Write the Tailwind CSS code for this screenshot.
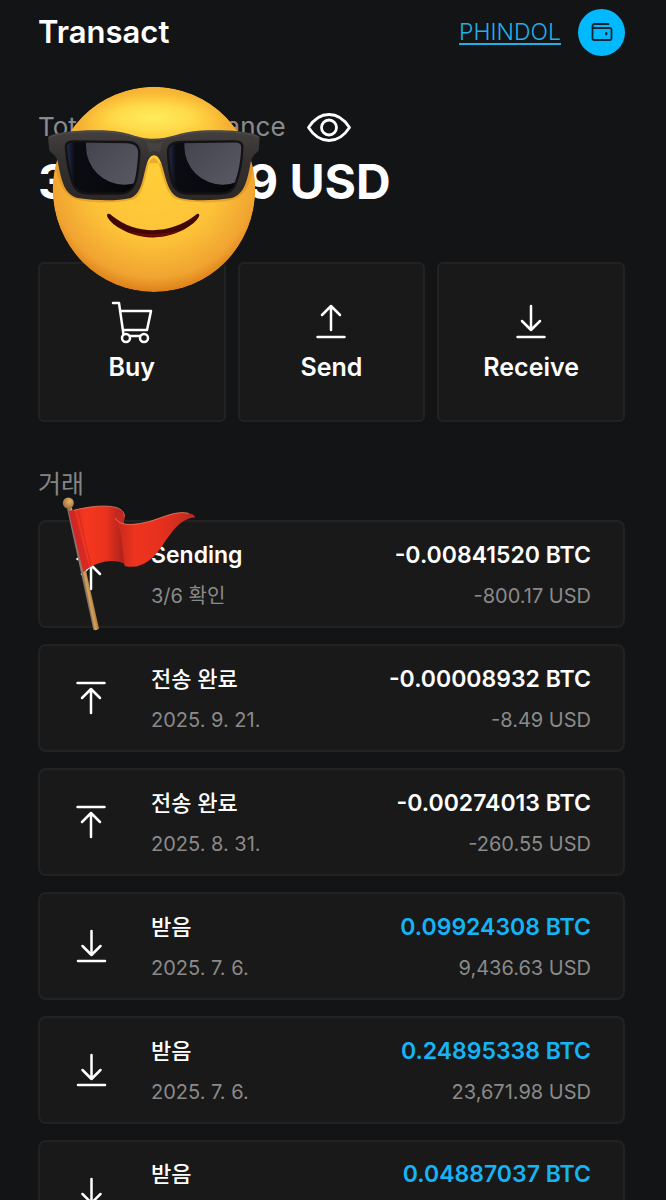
<!DOCTYPE html>
<html lang="ko" class="h-full">

<head>
  <meta charset="UTF-8">
  <meta name="viewport" content="width=device-width, initial-scale=1.0">
  <title>Transact</title>

  <script src="https://cdn.jsdelivr.net/npm/@tailwindcss/browser@4"></script>
</head>

<body class="h-full overflow-hidden bg-[#131416] text-white font-['Inter','Noto_Sans_CJK_KR',sans-serif]">
  <!-- shared icons -->
  <svg class="hidden">
    <symbol id="icon-sent" viewBox="0 0 32 36" fill="none" stroke="currentColor" stroke-width="2.500" stroke-linecap="round" stroke-linejoin="round">
      <path d="M2.500 3h27M16 9v24M7 18l9-9 9 9" />
    </symbol>
    <symbol id="icon-received" viewBox="0 0 32 36" fill="none" stroke="currentColor" stroke-width="2.500" stroke-linecap="round" stroke-linejoin="round">
      <path d="M3 33h27M16.500 3v24M7.500 18l9 9 9-9" />
    </symbol>
  </svg>

  <main class="relative pl-[38px] pr-[41px]">
    <header class="flex h-16 items-center justify-between">
      <h1 class="text-[31px] font-semibold leading-10">Transact</h1>
      <div class="flex items-center gap-[17px]">
        <a href="#" class="text-[23px] font-light text-[#22aee6] underline decoration-2 underline-offset-3">PHINDOL</a>
        <button aria-label="Wallet" class="flex size-[47px] items-center justify-center rounded-full bg-[#00b9ff] text-[#10252f]">
          <svg class="h-5 w-6" viewBox="0 0 24 20" fill="none" stroke="currentColor" stroke-width="1.8" stroke-linecap="round" stroke-linejoin="round">
            <path d="M18.500 2H4.500a2 2 0 0 0 0 4H20a1.500 1.500 0 0 1 1.500 1.500v9A1.500 1.500 0 0 1 20 18H4a1.500 1.500 0 0 1-1.500-1.500V4" />
            <rect x="15.500" y="10.500" width="1.500" height="2.500" rx=".7" fill="currentColor" stroke-width=".8" />
          </svg>
        </button>
      </div>
    </header>

    <section class="mt-[45px]">
      <div class="flex items-center gap-5">
        <h2 class="text-[26px] leading-9 text-[#8b8b8d]">Total Wallet Balance</h2>
        <button aria-label="Hide balance">
          <svg class="h-9 w-[46px]" viewBox="0 0 46 36" fill="none" stroke="currentColor" stroke-width="2.8" stroke-linejoin="round">
            <path d="M2.500 18.500C8 10 15 5.500 23 5.500S38 10 43.500 18.500C38 27 31 31.500 23 31.500S8 27 2.500 18.500Z" />
            <circle cx="23" cy="18.500" r="7.500" />
          </svg>
        </button>
      </div>
      <p class="mt-[7px] text-5xl font-bold leading-[60px]">311,784.19 USD</p>
    </section>

    <nav class="mt-[50px] grid grid-cols-3 gap-3">
      <button class="flex h-40 flex-col items-center rounded-md border-2 border-[#222222] bg-[#191919] pt-[35px]">
        <svg class="h-12 w-12" viewBox="0 0 48 48" fill="none" stroke="currentColor" stroke-width="2.500" stroke-linecap="round" stroke-linejoin="round">
          <path d="M5 4h6l5 35M12 12h31l-4 19H15M16 37h20" />
          <circle cx="18" cy="39" r="4" fill="#191919" />
          <circle cx="36" cy="39" r="4" fill="#191919" />
        </svg>
        <span class="mt-1 text-[25px] font-semibold leading-8">Buy</span>
      </button>
      <button class="flex h-40 flex-col items-center rounded-md border-2 border-[#222222] bg-[#191919] pt-[35px]">
        <svg class="h-12 w-12" viewBox="0 0 48 48" fill="none" stroke="currentColor" stroke-width="2.500" stroke-linecap="round" stroke-linejoin="round">
          <path d="M10.500 38h27M24 31V7M15 16l9-9 9 9" />
        </svg>
        <span class="mt-1 text-[25px] font-semibold leading-8">Send</span>
      </button>
      <button class="flex h-40 flex-col items-center rounded-md border-2 border-[#222222] bg-[#191919] pt-[35px]">
        <svg class="h-12 w-12" viewBox="0 0 48 48" fill="none" stroke="currentColor" stroke-width="2.500" stroke-linecap="round" stroke-linejoin="round">
          <path d="M10.500 38h27M24 7v24M15 22l9 9 9-9" />
        </svg>
        <span class="mt-1 text-[25px] font-semibold leading-8">Receive</span>
      </button>
    </nav>

    <h2 class="mt-11 text-[25px] leading-9 text-[#858585]">거래</h2>

    <ul class="mt-[18px] flex flex-col gap-4">
      <li class="flex h-27 items-center rounded-lg border-2 border-[#222222] bg-[#191919] pt-0.5 pr-8 pl-[35px]">
        <svg class="-mt-0.5 h-9 w-8"><use href="#icon-sent" /></svg>
        <div class="ml-11 flex-1">
          <p class="text-[23px] font-semibold leading-8">Sending</p>
          <p class="mt-[9px] text-xl leading-8 text-[#8a8a8a]">3/6 확인</p>
        </div>
        <div class="text-right">
          <p class="text-[23px] font-semibold leading-8">-0.00841520 BTC</p>
          <p class="mt-[9px] text-xl leading-8 text-[#8a8a8a]">-800.17 USD</p>
        </div>
      </li>
      <li class="flex h-27 items-center rounded-lg border-2 border-[#222222] bg-[#191919] pt-0.5 pr-8 pl-[35px]">
        <svg class="-mt-0.5 h-9 w-8"><use href="#icon-sent" /></svg>
        <div class="ml-11 flex-1">
          <p class="text-[22px] font-medium leading-8">전송 완료</p>
          <p class="mt-[9px] text-xl leading-8 text-[#8a8a8a]">2025. 9. 21.</p>
        </div>
        <div class="text-right">
          <p class="text-[23px] font-semibold leading-8">-0.00008932 BTC</p>
          <p class="mt-[9px] text-xl leading-8 text-[#8a8a8a]">-8.49 USD</p>
        </div>
      </li>
      <li class="flex h-27 items-center rounded-lg border-2 border-[#222222] bg-[#191919] pt-0.5 pr-8 pl-[35px]">
        <svg class="-mt-0.5 h-9 w-8"><use href="#icon-sent" /></svg>
        <div class="ml-11 flex-1">
          <p class="text-[22px] font-medium leading-8">전송 완료</p>
          <p class="mt-[9px] text-xl leading-8 text-[#8a8a8a]">2025. 8. 31.</p>
        </div>
        <div class="text-right">
          <p class="text-[23px] font-semibold leading-8">-0.00274013 BTC</p>
          <p class="mt-[9px] text-xl leading-8 text-[#8a8a8a]">-260.55 USD</p>
        </div>
      </li>
      <li class="flex h-27 items-center rounded-lg border-2 border-[#222222] bg-[#191919] pt-0.5 pr-8 pl-[35px]">
        <svg class="-mt-0.5 h-9 w-8"><use href="#icon-received" /></svg>
        <div class="ml-11 flex-1">
          <p class="text-[22px] font-medium leading-8">받음</p>
          <p class="mt-[9px] text-xl leading-8 text-[#8a8a8a]">2025. 7. 6.</p>
        </div>
        <div class="text-right">
          <p class="text-[23px] font-semibold leading-8 text-[#14b4f5]">0.09924308 BTC</p>
          <p class="mt-[9px] text-xl leading-8 text-[#8a8a8a]">9,436.63 USD</p>
        </div>
      </li>
      <li class="flex h-27 items-center rounded-lg border-2 border-[#222222] bg-[#191919] pt-0.5 pr-8 pl-[35px]">
        <svg class="-mt-0.5 h-9 w-8"><use href="#icon-received" /></svg>
        <div class="ml-11 flex-1">
          <p class="text-[22px] font-medium leading-8">받음</p>
          <p class="mt-[9px] text-xl leading-8 text-[#8a8a8a]">2025. 7. 6.</p>
        </div>
        <div class="text-right">
          <p class="text-[23px] font-semibold leading-8 text-[#14b4f5]">0.24895338 BTC</p>
          <p class="mt-[9px] text-xl leading-8 text-[#8a8a8a]">23,671.98 USD</p>
        </div>
      </li>
      <li class="flex h-27 items-start rounded-lg border-2 border-[#222222] bg-[#191919] pt-4 pr-8 pl-[35px]">
        <svg class="mt-[18px] h-9 w-8"><use href="#icon-received" /></svg>
        <p class="ml-11 flex-1 text-[22px] font-medium leading-8">받음</p>
        <p class="text-[23px] font-semibold leading-8 text-[#14b4f5]">0.04887037 BTC</p>
      </li>
    </ul>

    <!-- sunglasses sticker over the balance -->
    <svg class="absolute top-[86px] left-[47px] h-[207px] w-[214px]" viewBox="81 18 642 621">
      <defs>
        <radialGradient id="face" cx=".5" cy=".42" r=".6">
          <stop offset="0" stop-color="#ffcf38" />
          <stop offset=".55" stop-color="#fdc238" />
          <stop offset=".85" stop-color="#f0a431" />
          <stop offset="1" stop-color="#d87512" />
        </radialGradient>
        <radialGradient id="shine" cx=".5" cy=".5" r=".5">
          <stop offset="0" stop-color="#ffec5c" />
          <stop offset=".5" stop-color="#ffe552" stop-opacity=".7" />
          <stop offset="1" stop-color="#ffd43c" stop-opacity="0" />
        </radialGradient>
        <linearGradient id="frame" x1="0" y1="0" x2="0" y2="1">
          <stop offset="0" stop-color="#444040" />
          <stop offset=".4" stop-color="#353131" />
          <stop offset="1" stop-color="#2c2828" />
        </linearGradient>
        <linearGradient id="glare" x1="0" y1="0" x2="1" y2="1">
          <stop offset="0" stop-color="#3c3c45" />
          <stop offset=".6" stop-color="#51515c" />
          <stop offset="1" stop-color="#5d5d69" />
        </linearGradient>
        <linearGradient id="lens" x1="0" y1="0" x2="1" y2="0">
          <stop offset="0" stop-color="#2c3c66" />
          <stop offset=".14" stop-color="#0b0c12" />
          <stop offset="1" stop-color="#050609" />
        </linearGradient>
        <clipPath id="head">
          <ellipse cx="402" cy="328" rx="304" ry="308" />
        </clipPath>
        <clipPath id="left-lens">
          <path d="M138 204C136 190 144 184 160 184L320 186C346 186 358 196 358 220 356 250 354 282 346 306 338 330 322 341 298 341L204 341C178 340 164 328 158 308 146 274 140 238 138 204Z" />
        </clipPath>
        <clipPath id="right-lens">
          <path d="M667 204C668 190 660 184 644 184L484 186C456 186 442 196 444 220 446 250 448 282 456 306 464 330 480 341 504 341L604 341C628 340 642 328 648 308 660 274 666 238 667 204Z" />
        </clipPath>
      </defs>
      <g clip-path="url(#head)">
        <ellipse cx="402" cy="328" rx="304" ry="308" fill="url(#face)" />
        <ellipse cx="400" cy="112" rx="230" ry="76" fill="url(#shine)" />
        <path d="M104 250C116 310 130 350 176 360 220 370 300 370 340 358 384 342 374 236 401 234 428 236 424 342 472 358 510 370 590 370 634 360 680 350 690 310 704 250Z" fill="#d98a1c" opacity=".5" />
      </g>
      <path d="M84 172C100 154 200 148 270 152 330 156 350 176 400 176 450 176 480 156 536 152 600 148 700 152 719 170L716 212C704 222 696 228 692 248 682 300 674 346 630 355 584 362 516 364 478 354 426 338 438 228 402 226 366 228 382 338 332 354 294 364 224 362 178 355 132 346 124 300 114 248 110 228 100 222 88 212Z" fill="url(#frame)" />
      <path d="M90 172C110 158 200 152 270 156 330 160 350 180 400 180 450 180 480 160 536 156 600 152 690 156 714 172" fill="none" stroke="#5c5858" stroke-width="4" opacity=".5" />
      <path d="M378 184Q404 194 428 184L420 218Q402 208 388 218Z" fill="#4c4848" opacity=".6" />
      <g clip-path="url(#left-lens)">
        <path d="M130 170h240v180H130z" fill="url(#lens)" />
        <circle cx="313" cy="199" r="115" fill="url(#glare)" />
      </g>
      <g clip-path="url(#right-lens)">
        <path d="M434 170h240v180H434z" fill="url(#lens)" />
        <circle cx="608" cy="199" r="115" fill="url(#glare)" />
      </g>
      <path d="M138 204C136 190 144 184 160 184L320 186C346 186 358 196 358 220 356 250 354 282 346 306 338 330 322 341 298 341L204 341C178 340 164 328 158 308 146 274 140 238 138 204ZM667 204C668 190 660 184 644 184L484 186C456 186 442 196 444 220 446 250 448 282 456 306 464 330 480 341 504 341L604 341C628 340 642 328 648 308 660 274 666 238 667 204Z" fill="none" stroke="#141214" stroke-width="7" />
      <path d="M262 403C266 400 271 402 277 408 350 466 452 464 526 406 532 400 537 400 538 405 538 412 530 420 520 430 450 486 350 486 280 432 268 421 258 409 262 403Z" fill="#400805" />
      <path d="M322 452C370 466 432 466 482 450 440 476 364 478 322 452Z" fill="#6b0a06" />
    </svg>

    <!-- red flag sticker over the pending transaction -->
    <svg class="absolute top-[496px] left-[62px] h-[136px] w-[134px]" viewBox="126 108 402 408">
      <defs>
        <linearGradient id="pole" gradientUnits="userSpaceOnUse" x1="178" y1="328" x2="198" y2="324">
          <stop offset="0" stop-color="#7d7784" />
          <stop offset=".35" stop-color="#8d765c" />
          <stop offset=".6" stop-color="#d8a45b" />
          <stop offset="1" stop-color="#b5813f" />
        </linearGradient>
        <linearGradient id="cloth" x1="0" y1="0" x2="1" y2="0">
          <stop offset="0" stop-color="#d92a20" />
          <stop offset=".3" stop-color="#f5371f" />
          <stop offset=".65" stop-color="#ea321e" />
          <stop offset="1" stop-color="#a51f1b" />
        </linearGradient>
        <linearGradient id="tail" x1="0" y1="0" x2="1" y2="0">
          <stop offset="0" stop-color="#c3271d" />
          <stop offset=".25" stop-color="#ee341f" />
          <stop offset=".6" stop-color="#e5301e" />
          <stop offset="1" stop-color="#b92a20" />
        </linearGradient>
        <radialGradient id="knob" cx=".6" cy=".35" r=".7">
          <stop offset="0" stop-color="#e5b36c" />
          <stop offset="1" stop-color="#9c6e39" />
        </radialGradient>
      </defs>
      <path d="M141 145L156 143 237 506Q229 513 220 509Z" fill="url(#pole)" />
      <circle cx="145" cy="129" r="16.500" fill="url(#knob)" />
      <path d="M146 154C190 140 250 134 286 142 310 148 318 164 312 184L318 314C280 292 226 306 190 336Z" fill="url(#cloth)" />
      <path d="M146 154L162 151 208 322 190 336Z" fill="#c7232a" opacity=".65" />
      <path d="M174 148L212 316" stroke="#b7241c" stroke-width="3" fill="none" opacity=".6" />
      <path d="M286 174C300 202 350 194 390 184 440 168 470 152 506 160 518 162 524 166 526 172 478 176 456 218 430 252 402 298 364 330 314 318 306 270 310 222 286 174Z" fill="url(#tail)" />
      <path d="M286 174C284 154 300 146 312 164 316 176 310 184 310 190 298 188 290 182 286 174Z" fill="#c02a20" />
      <path d="M162 151C210 138 262 134 290 143 304 148 314 156 313 170M286 174C300 202 350 194 390 184 440 168 470 152 506 160" fill="none" stroke="#ff8a70" stroke-width="3" opacity=".7" />
    </svg>
  </main>
</body>

</html>
